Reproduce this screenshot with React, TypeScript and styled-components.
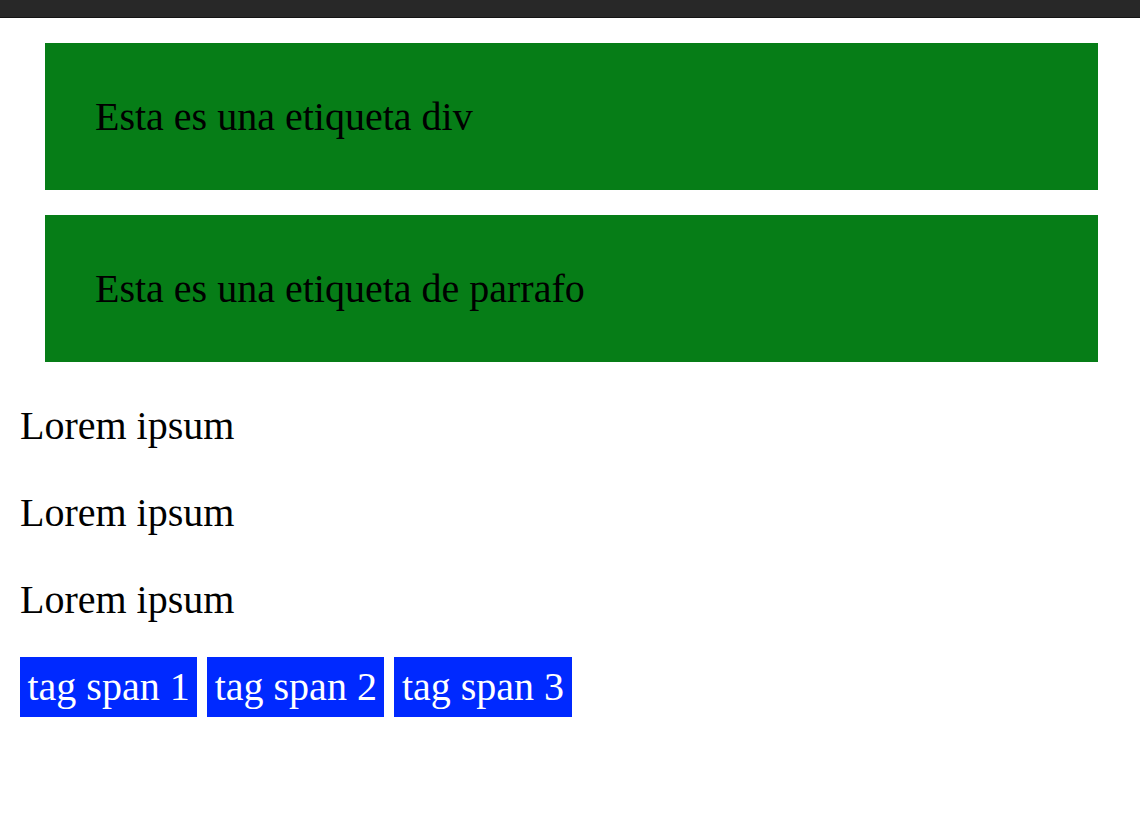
import React from 'react';
import styled, { createGlobalStyle } from 'styled-components';

const GlobalStyle = createGlobalStyle`
  html, body {
    margin: 0;
    padding: 0;
    background: #ffffff;
  }

  body {
    font-family: "Liberation Serif", "Times New Roman", serif;
    font-size: 40px;
    color: #000000;
  }
`;

const BrowserBar = styled.div`
  height: 17px;
  background: #282828;
  border-bottom: 1px solid #141414;
`;

const Page = styled.main`
  padding: 25px 20px 0;
`;

const GreenBox = styled.div`
  background: #067d17;
  margin: 0 22px 25px 25px;
  padding: 52px 50px 51px;
  line-height: 44px;
`;

const Paragraph = styled.p`
  margin: 0;
`;

const Lorem = styled.p`
  margin: 0 0 40px;
  line-height: 47px;

  &:first-of-type {
    margin-top: 40px;
  }
`;

const TagRow = styled.div`
  margin-top: -6px;
  line-height: 44px;
`;

const Tag = styled.span`
  display: inline-block;
  background: #0029ff;
  color: #ffffff;
  padding: 8px 7.5px;
`;

const App: React.FC = () => {
  return (
    <>
      <GlobalStyle />
      <BrowserBar />
      <Page>
        <GreenBox>Esta es una etiqueta div</GreenBox>
        <GreenBox as="section">
          <Paragraph>Esta es una etiqueta de parrafo</Paragraph>
        </GreenBox>
        <div>
          <Lorem>Lorem ipsum</Lorem>
          <Lorem>Lorem ipsum</Lorem>
          <Lorem>Lorem ipsum</Lorem>
        </div>
        <TagRow>
          <Tag>tag span 1</Tag> <Tag>tag span 2</Tag> <Tag>tag span 3</Tag>
        </TagRow>
      </Page>
    </>
  );
};

export default App;
